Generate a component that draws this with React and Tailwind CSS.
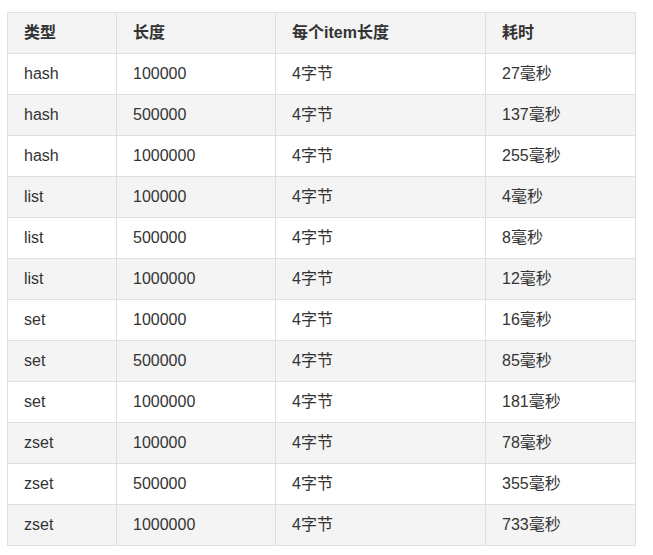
const rows = [
  ["hash", "100000", "4字节", "27毫秒"],
  ["hash", "500000", "4字节", "137毫秒"],
  ["hash", "1000000", "4字节", "255毫秒"],
  ["list", "100000", "4字节", "4毫秒"],
  ["list", "500000", "4字节", "8毫秒"],
  ["list", "1000000", "4字节", "12毫秒"],
  ["set", "100000", "4字节", "16毫秒"],
  ["set", "500000", "4字节", "85毫秒"],
  ["set", "1000000", "4字节", "181毫秒"],
  ["zset", "100000", "4字节", "78毫秒"],
  ["zset", "500000", "4字节", "355毫秒"],
  ["zset", "1000000", "4字节", "733毫秒"],
];

const widths = ["w-[109px]", "w-[159px]", "w-[210px]", "w-[150px]"];

export default function App() {
  return (
    <div className="w-[653px] h-[555px] bg-white pt-[12px] pl-[7px] font-['Liberation_Sans','Noto_Sans_CJK_SC',sans-serif] text-[16px] text-[#333]">
      <table className="border-collapse table-fixed w-[629px]">
        <thead>
          <tr className="bg-[#f4f4f4]">
            {["类型", "长度", "每个item长度", "耗时"].map((h, i) => (
              <th
                key={i}
                className={`${widths[i]} h-[41px] border border-[#dfdfdf] px-[16px] text-left font-bold`}
              >
                {h}
              </th>
            ))}
          </tr>
        </thead>
        <tbody>
          {rows.map((r, idx) => (
            <tr key={idx} className={idx % 2 === 1 ? "bg-[#f4f4f4]" : "bg-white"}>
              {r.map((c, i) => (
                <td key={i} className="h-[41px] border border-[#dfdfdf] px-[16px] text-left">
                  {c}
                </td>
              ))}
            </tr>
          ))}
        </tbody>
      </table>
    </div>
  );
}
